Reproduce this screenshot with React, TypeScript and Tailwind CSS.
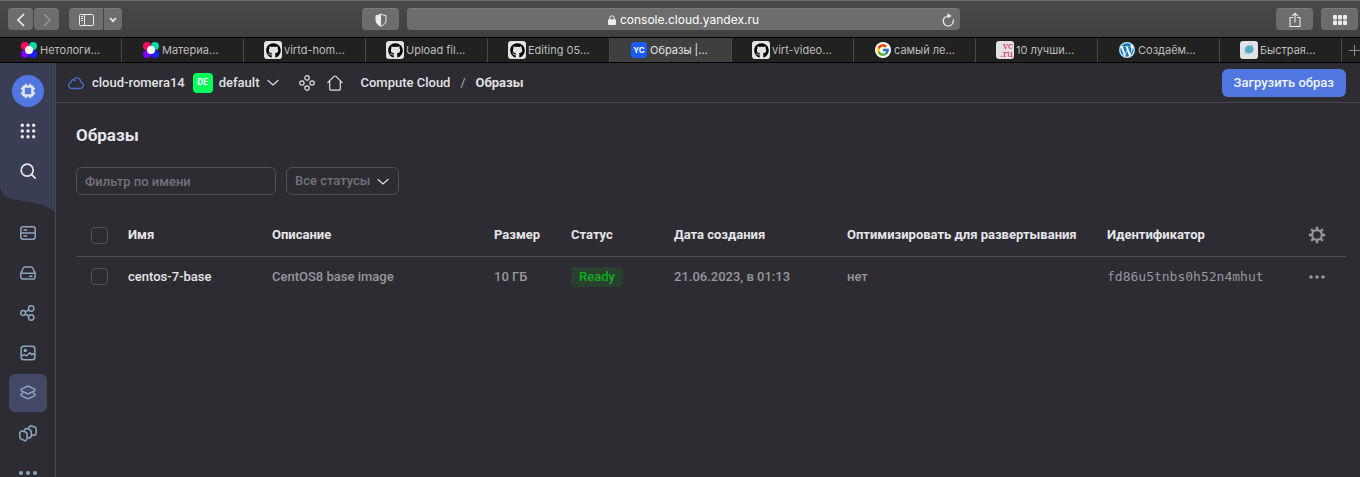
import React from 'react';
import { FaGithub, FaWordpress } from 'react-icons/fa';
import { FcGoogle } from 'react-icons/fc';

type IconProps = { className?: string; children: React.ReactNode };

function Icon({ className = 'size-4', children }: IconProps) {
  return (
    <svg
      viewBox="0 0 16 16"
      className={className}
      fill="none"
      stroke="currentColor"
      strokeWidth="1.5"
      strokeLinecap="round"
      strokeLinejoin="round"
      aria-hidden="true"
    >
      {children}
    </svg>
  );
}

/* ---------- Browser window ---------- */

function NetologyIcon() {
  return (
    <svg viewBox="0 0 16 16" className="size-4" aria-hidden="true">
      <circle cx="4" cy="4" r="4" fill="#ff0a5a" />
      <circle cx="12" cy="4" r="4" fill="#00d9a5" />
      <circle cx="4" cy="12" r="4" fill="#7a00ff" />
      <circle cx="12" cy="12" r="4" fill="#1a22ff" />
      <circle cx="8" cy="8" r="4" fill="#fff" />
    </svg>
  );
}

function GithubIcon() {
  return (
    <span className="flex size-[18px] items-center justify-center rounded-[3px] bg-[#e2e2e2] text-black">
      <FaGithub className="size-[15px]" />
    </span>
  );
}

function YandexCloudIcon() {
  return (
    <span className="flex size-4 items-center justify-center rounded-[4px] bg-[#1a5cff] text-[8px] leading-none font-bold text-white">
      YC
    </span>
  );
}

function GoogleIcon() {
  return (
    <span className="flex size-4 items-center justify-center rounded-full bg-white">
      <FcGoogle className="size-[14px]" />
    </span>
  );
}

function VcIcon() {
  return (
    <span className="flex size-[18px] flex-col items-end justify-center rounded-[3px] bg-[#e2e2e2] pr-px font-['DejaVu_Serif',serif] text-[9px] leading-[8px] text-[#e8205f]">
      <span>vc</span>
      <span>.ru</span>
    </span>
  );
}

function WordpressIcon() {
  return (
    <span className="flex size-4 items-center justify-center rounded-full bg-white text-[#0f7ab5]">
      <FaWordpress className="size-4" />
    </span>
  );
}

function SplashIcon() {
  return (
    <span className="flex size-[18px] items-center justify-center rounded-[3px] bg-[#e2e2e2]">
      <svg viewBox="0 0 16 16" className="size-4" aria-hidden="true">
        <path
          d="M3.500 7.500 4.800 4.500l3-1.100L9.800 3.500l3-.8-1 1.900 1 2.600-.6 2.500-2.300 1.600-2.500.7-2-.6L3 12l1.200-2.200L2.500 8.600Z"
          fill="#8cc7d8"
        />
        <circle cx="8.300" cy="7.300" r="3.800" fill="#52a9c4" />
      </svg>
    </span>
  );
}

const tabs = [
  { title: 'Нетологи…', icon: <NetologyIcon /> },
  { title: 'Материа…', icon: <NetologyIcon /> },
  { title: 'virtd-hom…', icon: <GithubIcon /> },
  { title: 'Upload fil…', icon: <GithubIcon /> },
  { title: 'Editing 05…', icon: <GithubIcon /> },
  { title: 'Образы |…', icon: <YandexCloudIcon />, active: true },
  { title: 'virt-video…', icon: <GithubIcon /> },
  { title: 'самый ле…', icon: <GoogleIcon /> },
  { title: '10 лучши…', icon: <VcIcon /> },
  { title: 'Создаём…', icon: <WordpressIcon /> },
  { title: 'Быстрая…', icon: <SplashIcon /> },
];

const chromeButton =
  'flex h-[22px] items-center justify-center border-t border-[#7c7c7c] bg-[#6d6d6d] text-[#ececec]';

function BrowserToolbar() {
  return (
    <div className="grid h-[38px] grid-cols-[407fr_553fr_400fr] items-center border-t border-b border-t-[#6e6e6e] border-b-black bg-linear-to-b from-[#494949] to-[#404040]">
      <div className="flex items-center pr-2 pl-2">
        <button aria-label="Назад" className={`${chromeButton} w-[25px] rounded-[4px]`}>
          <svg viewBox="0 0 10 14" className="h-[14px] w-[10px]" fill="none" stroke="currentColor" strokeWidth="1.7">
            <path d="M8 1 2 7l6 6" />
          </svg>
        </button>
        <button aria-label="Вперёд" className={`${chromeButton} ml-px w-[25px] rounded-[4px]`}>
          <svg viewBox="0 0 10 14" className="h-[14px] w-[10px]" fill="none" stroke="#979797" strokeWidth="1.500">
            <path d="M2 1l6 6-6 6" />
          </svg>
        </button>
        <button aria-label="Боковая панель" className={`${chromeButton} ml-[10px] w-[34px] rounded-l-[4px]`}>
          <svg viewBox="0 0 15 12" className="h-3 w-[15px]" fill="none" stroke="currentColor">
            <rect x="0.5" y="0.5" width="14" height="11" rx="1" />
            <path d="M5.500 1v10M2 2.500h2M2 4.500h2M2 6.500h2" />
          </svg>
        </button>
        <button aria-label="Группы вкладок" className={`${chromeButton} ml-px w-[18px] rounded-r-[4px]`}>
          <svg viewBox="0 0 8 6" className="h-[6px] w-2" fill="none" stroke="currentColor" strokeWidth="1.700">
            <path d="M1 1 4 4.200 7 1" />
          </svg>
        </button>
        <button aria-label="Отчёт о конфиденциальности" className={`${chromeButton} ml-auto w-[37px] rounded-[4px]`}>
          <svg viewBox="0 0 12 14" className="h-[14px] w-3">
            <path d="M6 1c1.500 1 3.200 1.500 5 1.600v4.600C11 10 9 12 6 13.300 3 12 1 10 1 7.200V2.600C2.800 2.500 4.500 2 6 1Z" fill="none" stroke="#ececec" />
            <path d="M6 1v12.300C3 12 1 10 1 7.200V2.600C2.800 2.500 4.500 2 6 1Z" fill="#ececec" />
          </svg>
        </button>
      </div>
      <div className="grid h-[22px] grid-cols-[24px_1fr_24px] items-center rounded-[4px] border-t border-[#7c7c7c] bg-[#6d6d6d] text-white">
        <span />
        <span className="flex items-center justify-center gap-1 text-[12px] leading-4">
          <svg viewBox="0 0 8 10" className="h-[10px] w-2" aria-hidden="true">
            <rect x="0" y="4.200" width="8" height="5.800" rx="0.8" fill="#ececec" />
            <path d="M1.800 4.500V3a2.200 2.200 0 0 1 4.400 0v1.500" fill="none" stroke="#ececec" />
          </svg>
          console.cloud.yandex.ru
        </span>
        <button aria-label="Обновить" className="flex justify-center">
          <svg viewBox="0 0 12 14" className="h-[14px] w-3" fill="none" stroke="#ececec" strokeWidth="1.200">
            <path d="M11 6.400A5 5 0 1 1 6.500 3" />
            <path d="M5.500 .2 9.700 2.900 5.500 5.600Z" fill="#ececec" stroke="none" />
          </svg>
        </button>
      </div>
      <div className="flex items-center justify-end gap-2 pr-[2px]">
        <button aria-label="Поделиться" className={`${chromeButton} w-[37px] rounded-[4px]`}>
          <svg viewBox="0 0 12 16" className="h-4 w-3" fill="none" stroke="currentColor" strokeWidth="1.100">
            <path d="M4 5.500H1v9h10v-9H8M6 10.500V1.300M3.300 3.800 6 1.200l2.700 2.600" />
          </svg>
        </button>
        <button aria-label="Обзор вкладок" className={`${chromeButton} w-[37px] rounded-[4px]`}>
          <svg viewBox="0 0 14 10" className="h-[10px] w-[14px]" fill="currentColor">
            <rect x="0" y="0" width="4" height="4.400" rx="1" />
            <rect x="5" y="0" width="4" height="4.400" rx="1" />
            <rect x="10" y="0" width="4" height="4.400" rx="1" />
            <rect x="0" y="5.600" width="4" height="4.400" rx="1" />
            <rect x="5" y="5.600" width="4" height="4.400" rx="1" />
            <rect x="10" y="5.600" width="4" height="4.400" rx="1" />
          </svg>
        </button>
      </div>
    </div>
  );
}

function BrowserTabs() {
  return (
    <div className="flex h-[25px] border-b border-black bg-[#212121] text-[11px] leading-4">
      {tabs.map((tab, i) => (
        <button
          key={i}
          className={
            tab.active
              ? 'flex min-w-0 flex-1 items-center gap-[2px] border-r border-[#4a4a4a] bg-[#3f3f3f] pl-5 text-[#e4e4e4]'
              : 'flex min-w-0 flex-1 items-center gap-[2px] border-r border-[#4a4a4a] pl-5 text-[#bdbdbd]'
          }
        >
          <span className="flex w-[18px] shrink-0 justify-center">{tab.icon}</span>
          <span className="whitespace-nowrap">{tab.title}</span>
        </button>
      ))}
      <button aria-label="Новая вкладка" className="flex w-[18px] items-center justify-end text-[#8a8a8a]">
        <svg viewBox="0 0 11 11" className="size-[11px]" fill="none" stroke="currentColor">
          <path d="M5.500 0v11M0 5.500h11" />
        </svg>
      </button>
    </div>
  );
}

/* ---------- Console ---------- */

const services = [
  {
    label: 'Виртуальные машины',
    icon: (
      <Icon>
        <rect x="0.8" y="1.700" width="14.400" height="12.600" rx="2.500" />
        <path d="M1 8h14M4 4.900h2.600M4 11.100h2.600" />
      </Icon>
    ),
  },
  {
    label: 'Диски',
    icon: (
      <Icon>
        <path d="M.8 8.400 3 3.300a2 2 0 0 1 1.900-1.300h6.200A2 2 0 0 1 13 3.300l2.200 5.100v3.400a2.300 2.300 0 0 1-2.300 2.300H3.100A2.300 2.300 0 0 1 .8 11.800Z" />
        <path d="M1 8.200h14M9.500 11.200h2.600" />
      </Icon>
    ),
  },
  {
    label: 'Группы размещения',
    icon: (
      <Icon>
        <circle cx="3.200" cy="8" r="2.400" />
        <circle cx="11.200" cy="3.500" r="2.700" />
        <circle cx="11.200" cy="12.500" r="2.700" />
        <path d="m5.400 6.900 3.400-1.900M5.400 9.100l3.400 1.900" />
      </Icon>
    ),
  },
  {
    label: 'Снимки дисков',
    icon: (
      <Icon>
        <rect x="1.200" y="1.200" width="13.600" height="13.600" rx="2.500" />
        <circle cx="5.300" cy="5.600" r="1" fill="currentColor" />
        <path d="m1.400 11.200 2.900-1.600 2.200 1.200L10 7.700l1.700 2 1.500-1 1.600 1.200" />
      </Icon>
    ),
  },
  {
    label: 'Образы',
    active: true,
    icon: (
      <Icon>
        <path d="M6.900 1.500a3 3 0 0 1 2.200 0l5 2.400c1.400.7 1.400 1.500 0 2.200l-5 2.400a3 3 0 0 1-2.200 0l-5-2.400C.5 5.400.5 4.600 1.900 3.900Z" />
        <path d="M2.600 8 1.900 8.600c-1.400.8-1.400 1.600 0 2.300l5 2.500a3 3 0 0 0 2.200 0l5-2.500c1.400-.7 1.400-1.500 0-2.300L13.400 8" />
      </Icon>
    ),
  },
  {
    label: 'Группы виртуальных машин',
    icon: (
      <svg viewBox="0 0 18 17" className="h-[17px] w-[18px]" fill="none" stroke="currentColor" strokeWidth="1.500" strokeLinejoin="round" aria-hidden="true">
        <path d="m.8 7.500 1.900-1.700 4 1.200 1.400 1.700v5.200l-1.600 2-4.200-1.600L.8 12.700Z" />
        <path d="m5.400 6 .2-1.200L7 3.400l4 1.300 1.300 1.700v4.900L11 13l-2.600-.6" />
        <path d="m9.600 3.800.2-1.400 1.700-1.600L15.900 2l1.300 1.800v4.800l-1.600 1.900-3-.7" />
      </svg>
    ),
  },
  {
    label: 'Ещё',
    icon: (
      <svg viewBox="0 0 18 4" className="h-1 w-[18px]" fill="currentColor" aria-hidden="true">
        <circle cx="2" cy="2" r="2" />
        <circle cx="9" cy="2" r="2" />
        <circle cx="16" cy="2" r="2" />
      </svg>
    ),
  },
];

function Sidebar() {
  return (
    <aside className="relative w-14 shrink-0 overflow-hidden border-r border-[#4b4a50] text-[#8ba6bf]">
      <svg viewBox="0 0 55 150" className="absolute top-0 left-0 h-[150px] w-[55px]" aria-hidden="true">
        <path d="M0 0H55V149C46 141 30 139 15 136.500 6 135 0 131 0 122Z" fill="#3a3e54" />
      </svg>
      <div className="relative flex flex-col items-center pt-2 text-[#e6e6ea]">
        <a href="#compute" aria-label="Compute Cloud" className="flex h-10 items-center">
          <span className="flex size-8 items-center justify-center rounded-full bg-[#5077df]">
            <svg viewBox="0 0 16 16" className="size-4" fill="none" stroke="currentColor" aria-hidden="true">
              <rect x="3.500" y="3.500" width="9" height="9" rx="1.200" strokeWidth="2.600" />
              <path d="M5.700.8v2M10.300.8v2M5.700 13.200v2M10.300 13.200v2M.8 5.700h2M.8 10.300h2M13.200 5.700h2M13.200 10.300h2" strokeWidth="1.700" />
            </svg>
          </span>
        </a>
        <button aria-label="Все сервисы" className="flex h-10 items-center">
          <svg viewBox="0 0 16 16" className="size-4" fill="currentColor" aria-hidden="true">
            {[2.3, 8, 13.7].map((y) => [2.3, 8, 13.7].map((x) => <circle key={`${x}-${y}`} cx={x} cy={y} r="1.700" />))}
          </svg>
        </button>
        <button aria-label="Поиск" className="flex h-10 items-center">
          <Icon>
            <circle cx="7.200" cy="7.200" r="6" strokeWidth="1.700" />
            <path d="m11.700 11.700 3.500 3.500" strokeWidth="1.700" />
          </Icon>
        </button>
      </div>
      <nav className="flex flex-col items-center pt-[22px]">
        {services.map((s) => (
          <a key={s.label} href="#service" aria-label={s.label} className="flex h-10 items-center">
            <span
              className={
                s.active
                  ? 'flex size-[38px] items-center justify-center rounded-[6px] bg-[#424865]'
                  : 'flex size-[38px] items-center justify-center'
              }
            >
              {s.icon}
            </span>
          </a>
        ))}
      </nav>
    </aside>
  );
}

function Header() {
  return (
    <header className="flex h-10 items-center border-b border-[#47464c] pr-[14px] pl-3 text-[#e2e1e4]">
      <a href="#cloud" className="flex items-center gap-2">
        <Icon className="size-4 text-[#4c6cc8]">
          <path d="M4 13.500a3.200 3.200 0 0 1-.8-6.300 1.900 1.900 0 0 1 2.300-2.500 3.900 3.900 0 0 1 7.200 2.100 3.400 3.400 0 0 1-.4 6.700ZM5.300 4.900l1.700 1" strokeWidth="1.300" />
        </Icon>
        cloud-romera14
      </a>
      <button className="ml-2 flex items-center">
        <span className="flex size-5 items-center justify-center rounded-[4px] bg-[#00ff5a] text-[9px] leading-none font-bold text-white">
          DE
        </span>
        <span className="ml-[6px]">default</span>
        <svg viewBox="0 0 12 8" className="ml-2 h-2 w-3" fill="none" stroke="currentColor" strokeWidth="1.200" strokeLinecap="round" aria-hidden="true">
          <path d="m1 1.500 5 4.500 5-4.500" />
        </svg>
      </button>
      <a href="#resources" aria-label="Ресурсы" className="ml-5">
        <Icon>
          <circle cx="8" cy="2.900" r="2.200" strokeWidth="1.200" />
          <circle cx="2.900" cy="8" r="2.200" strokeWidth="1.200" />
          <circle cx="13.100" cy="8" r="2.200" strokeWidth="1.200" />
          <circle cx="8" cy="13.100" r="2.200" strokeWidth="1.200" />
        </Icon>
      </a>
      <a href="#home" aria-label="Главная" className="ml-3">
        <Icon>
          <path d="M.8 7.700 7 1.400a1.400 1.400 0 0 1 2 0l6.200 6.300M2.700 6.200v7.600a1.400 1.400 0 0 0 1.400 1.400h7.800a1.400 1.400 0 0 0 1.400-1.400V6.200" strokeWidth="1.200" />
        </Icon>
      </a>
      <nav className="ml-[17px] flex items-center gap-[10px]">
        <a href="#compute">Compute Cloud</a>
        <span className="text-[#9a999e]">/</span>
        <span className="font-bold">Образы</span>
      </nav>
      <button className="ml-auto h-7 rounded-[6px] bg-[#5077df] px-3 text-[#f1f3fb]">Загрузить образ</button>
    </header>
  );
}

const checkbox =
  'block size-[17px] appearance-none rounded-[4px] border border-[#515055] checked:bg-[#5077df]';

function ImagesTable() {
  return (
    <table className="mt-5 w-full table-fixed text-left">
      <colgroup>
        <col className="w-[52px]" />
        <col className="w-36" />
        <col className="w-[222px]" />
        <col className="w-[77px]" />
        <col className="w-[103px]" />
        <col className="w-[173px]" />
        <col className="w-[260px]" />
        <col />
        <col className="w-[58px]" />
      </colgroup>
      <thead>
        <tr className="h-[41px] border-b border-[#4d4c51] text-[#e6e5e8]">
          <th className="pl-[15px]">
            <input type="checkbox" aria-label="Выбрать все" className={checkbox} />
          </th>
          <th className="font-bold">Имя</th>
          <th className="font-bold">Описание</th>
          <th className="font-bold">Размер</th>
          <th className="font-bold">Статус</th>
          <th className="font-bold">Дата создания</th>
          <th className="font-bold whitespace-nowrap">Оптимизировать для развертывания</th>
          <th className="font-bold">Идентификатор</th>
          <th>
            <button aria-label="Настройки таблицы" className="mx-auto block text-[#98979c]">
              <svg viewBox="0 0 18 18" className="size-[18px]" fill="none" stroke="currentColor" aria-hidden="true">
                <circle cx="9" cy="9" r="4.900" strokeWidth="2.200" />
                <path
                  d="M9 .8v3M9 14.200v3M.8 9h3M14.200 9h3M3.200 3.200l2.100 2.100M12.700 12.700l2.100 2.100M3.200 14.800l2.100-2.100M12.700 5.300l2.100-2.100"
                  strokeWidth="2.400"
                />
              </svg>
            </button>
          </th>
        </tr>
      </thead>
      <tbody>
        <tr className="h-[41px] text-[#98979c]">
          <td className="pl-[15px]">
            <input type="checkbox" aria-label="Выбрать centos-7-base" className={checkbox} />
          </td>
          <td>
            <a href="#image" className="text-[#e6e5e8]">centos-7-base</a>
          </td>
          <td>CentOS8 base image</td>
          <td>10 ГБ</td>
          <td>
            <span className="inline-block h-5 rounded-[4px] bg-[#29402f] px-2 leading-5 text-[#0db11b]">Ready</span>
          </td>
          <td>21.06.2023, в 01:13</td>
          <td>нет</td>
          <td className="font-['DejaVu_Sans_Mono',monospace]">fd86u5tnbs0h52n4mhut</td>
          <td>
            <button aria-label="Действия" className="mx-auto block">
              <svg viewBox="0 0 16 4" className="h-1 w-4" fill="currentColor" aria-hidden="true">
                <circle cx="2" cy="2" r="1.800" />
                <circle cx="8" cy="2" r="1.800" />
                <circle cx="14" cy="2" r="1.800" />
              </svg>
            </button>
          </td>
        </tr>
      </tbody>
    </table>
  );
}

export default function App() {
  return (
    <div className="flex h-screen flex-col overflow-hidden bg-[#2d2c33]">
      <div className="shrink-0 font-['Inter',sans-serif]">
        <BrowserToolbar />
        <BrowserTabs />
      </div>
      <div className="flex min-h-0 flex-1 font-['Roboto',sans-serif] text-[13px] leading-[18px] font-medium">
        <Sidebar />
        <div className="min-w-0 flex-1 overflow-auto">
          <Header />
          <main className="pt-5 pr-[14px] pl-5">
            <h1 className="text-[17px] leading-6 font-bold text-[#e6e5e8]">Образы</h1>
            <div className="mt-5 flex gap-[10px]">
              <input
                type="text"
                aria-label="Фильтр по имени"
                placeholder="Фильтр по имени"
                className="h-7 w-[200px] rounded-[6px] border border-[#515055] px-2 text-[#e6e5e8] placeholder:text-[#737278]"
              />
              <div className="relative">
                <select
                  aria-label="Статус"
                  className="h-7 w-[113px] appearance-none rounded-[6px] border border-[#515055] bg-transparent pr-6 pl-2 text-[#737278]"
                >
                  <option>Все статусы</option>
                </select>
                <svg viewBox="0 0 12 8" className="pointer-events-none absolute top-[11px] right-[10px] h-2 w-3 text-[#e2e1e4]" fill="none" stroke="currentColor" strokeWidth="1.200" strokeLinecap="round" aria-hidden="true">
                  <path d="m1 1.500 5 4.500 5-4.500" />
                </svg>
              </div>
            </div>
            <ImagesTable />
          </main>
        </div>
      </div>
    </div>
  );
}
